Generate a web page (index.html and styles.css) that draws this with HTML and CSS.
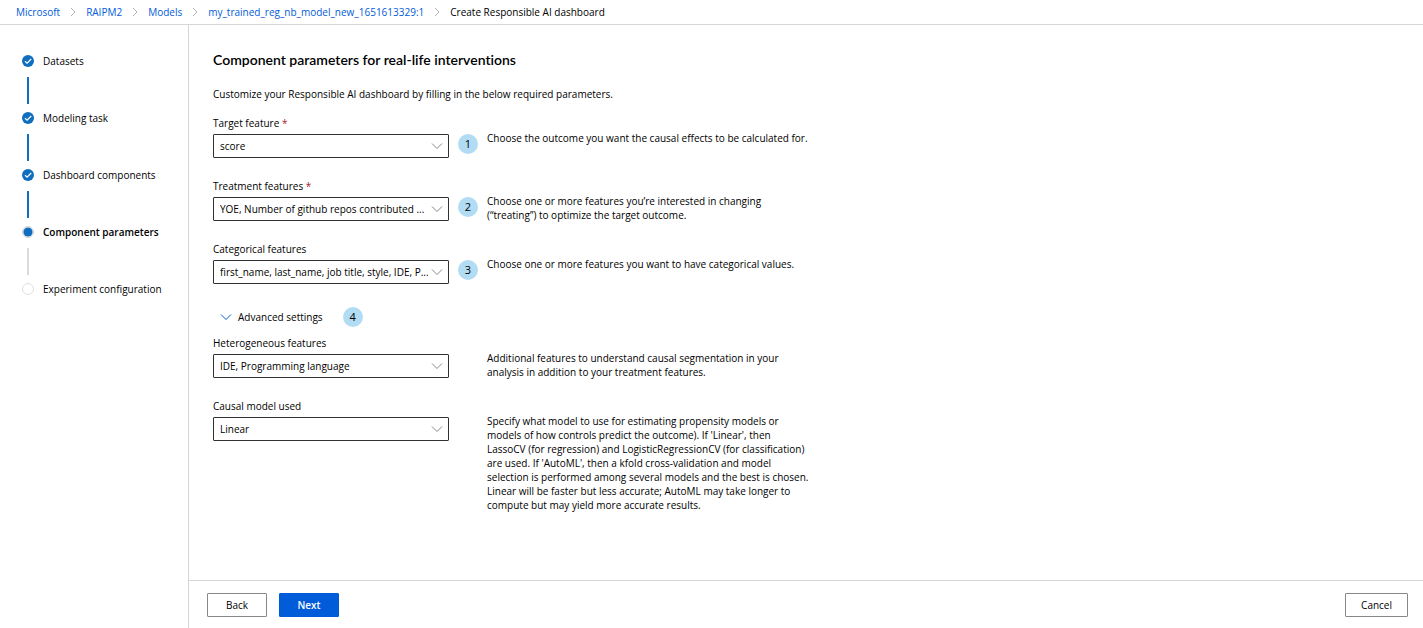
FILE: index.html
```html
<!DOCTYPE html>
<html lang="en">
<head>
<meta charset="utf-8">
<meta name="viewport" content="width=device-width, initial-scale=1">
<title>Create Responsible AI dashboard</title>
<link rel="stylesheet" href="styles.css">
</head>
<body>
<svg class="defs" aria-hidden="true">
  <symbol id="chevron-right" viewBox="0 0 6 10"><path d="M1 1l4 4-4 4" fill="none" stroke="currentColor"/></symbol>
  <symbol id="chevron-down" viewBox="0 0 12 8"><path d="M1 1.5l5 5 5-5" fill="none" stroke="currentColor"/></symbol>
  <symbol id="step-done" viewBox="0 0 12 12"><circle cx="6" cy="6" r="6" fill="#106ebe"/><path d="M3 6.2l2.1 2L9.2 4" fill="none" stroke="#fff" stroke-width="1.2"/></symbol>
  <symbol id="step-current" viewBox="0 0 12 12"><circle cx="6" cy="6" r="5.5" fill="#fff" stroke="#d2d0ce"/><circle cx="6" cy="6" r="4.6" fill="#106ebe"/></symbol>
  <symbol id="step-todo" viewBox="0 0 12 12"><circle cx="6" cy="6" r="5.5" fill="#fff" stroke="#e1dfdd"/></symbol>
</svg>
<nav class="breadcrumb" aria-label="Breadcrumb">
  <a href="#">Microsoft</a>
  <svg class="crumb-sep"><use href="#chevron-right"/></svg>
  <a href="#">RAIPM2</a>
  <svg class="crumb-sep"><use href="#chevron-right"/></svg>
  <a href="#">Models</a>
  <svg class="crumb-sep"><use href="#chevron-right"/></svg>
  <a href="#">my_trained_reg_nb_model_new_1651613329:1</a>
  <svg class="crumb-sep"><use href="#chevron-right"/></svg>
  <span aria-current="page">Create Responsible AI dashboard</span>
</nav>
<div class="workspace">
  <aside class="sidebar">
    <ol class="steps">
      <li class="step done"><svg class="step-icon"><use href="#step-done"/></svg><span>Datasets</span></li>
      <li class="step done"><svg class="step-icon"><use href="#step-done"/></svg><span>Modeling task</span></li>
      <li class="step done"><svg class="step-icon"><use href="#step-done"/></svg><span>Dashboard components</span></li>
      <li class="step current" aria-current="step"><svg class="step-icon"><use href="#step-current"/></svg><span>Component parameters</span></li>
      <li class="step"><svg class="step-icon"><use href="#step-todo"/></svg><span>Experiment configuration</span></li>
    </ol>
  </aside>
  <form class="panel">
    <main class="content">
      <h1>Component parameters for real-life interventions</h1>
      <p class="intro">Customize your Responsible AI dashboard by filling in the below required parameters.</p>

      <div class="row">
        <div class="field">
          <label for="target">Target feature <span class="required">*</span></label>
          <div class="select"><select id="target"><option>score</option></select><svg><use href="#chevron-down"/></svg></div>
        </div>
        <span class="badge">1</span>
        <p class="help">Choose the outcome you want the causal effects to be calculated for.</p>
      </div>
      <div class="row">
        <div class="field">
          <label for="treatment">Treatment features <span class="required">*</span></label>
          <div class="select"><select id="treatment"><option>YOE, Number of github repos contributed ...</option></select><svg><use href="#chevron-down"/></svg></div>
        </div>
        <span class="badge">2</span>
        <p class="help">Choose one or more features you’re interested in changing (“treating”) to optimize the target outcome.</p>
      </div>
      <div class="row">
        <div class="field">
          <label for="categorical">Categorical features</label>
          <div class="select"><select id="categorical"><option>first_name, last_name, job title, style, IDE, P...</option></select><svg><use href="#chevron-down"/></svg></div>
        </div>
        <span class="badge">3</span>
        <p class="help">Choose one or more features you want to have categorical values.</p>
      </div>

      <div class="advanced">
        <button type="button" class="toggle" aria-expanded="true"><svg><use href="#chevron-down"/></svg>Advanced settings</button>
        <span class="badge">4</span>
      </div>

      <div class="row">
        <div class="field">
          <label for="heterogeneous">Heterogeneous features</label>
          <div class="select"><select id="heterogeneous"><option>IDE, Programming language</option></select><svg><use href="#chevron-down"/></svg></div>
        </div>
        <p class="help">Additional features to understand causal segmentation in your analysis in addition to your treatment features.</p>
      </div>
      <div class="row">
        <div class="field">
          <label for="model">Causal model used</label>
          <div class="select"><select id="model"><option>Linear</option></select><svg><use href="#chevron-down"/></svg></div>
        </div>
        <p class="help">Specify what model to use for estimating propensity models or models of how controls predict the outcome). If 'Linear', then LassoCV (for regression) and LogisticRegressionCV (for classification) are used. If 'AutoML', then a kfold cross-validation and model selection is performed among several models and the best is chosen. Linear will be faster but less accurate; AutoML may take longer to compute but may yield more accurate results.</p>
      </div>
    </main>
    <footer class="actions">
      <button type="button" class="btn">Back</button>
      <button type="button" class="btn primary">Next</button>
      <button type="button" class="btn cancel">Cancel</button>
    </footer>
  </form>
</div>
</body>
</html>
```
FILE: styles.css
```css
* { box-sizing: border-box; }

body {
  margin: 0;
  min-height: 100vh;
  display: flex;
  flex-direction: column;
  background: #fff;
  color: #000;
  font: 10px/16px "Segoe UI", "Open Sans", "Noto Sans", sans-serif;
}

h1, p, ol { margin: 0; padding: 0; }
button, select { font: inherit; color: inherit; }

.defs { display: none; }

.breadcrumb {
  display: flex;
  align-items: center;
  height: 25px;
  padding: 0 16px;
  border-bottom: 1px solid #d6d6d6;
  white-space: nowrap;
}
.breadcrumb a { color: #015cda; text-decoration: none; }
.crumb-sep { width: 6px; height: 10px; margin: 0 10px; color: #b3b0ad; }

.workspace { flex: 1; display: flex; }

.sidebar {
  flex: none;
  width: 189px;
  padding: 28px 0 0 22px;
  border-right: 1px solid #d6d6d6;
}
.steps { list-style: none; }
.step {
  display: grid;
  grid-template-columns: 12px 1fr;
  column-gap: 9px;
  align-items: center;
  white-space: nowrap;
}
.step-icon { width: 12px; height: 12px; }
.step:not(:last-child)::after {
  content: "";
  width: 2px;
  height: 27px;
  margin: 8px 0 6px;
  justify-self: center;
  background: #dddbd9;
}
.step.done::after { background: #106ebe; }
.current { font-weight: 600; }

.panel { flex: 1; min-width: 0; display: flex; flex-direction: column; }
.content { flex: 1; padding: 25px 24px 0; }
h1 {
  font-family: "Segoe UI", Lato, "Open Sans", sans-serif;
  font-size: 14px;
  line-height: 20px;
  font-weight: 600;
  font-variant-ligatures: none;
}
.intro { margin: 16px 0 13px; }

.row {
  display: grid;
  grid-template-columns: 236px 20px minmax(0, 322px);
  column-gap: 9px;
  align-items: start;
  min-height: 63px;
}
.field { grid-column: 1; }
.field label { display: block; margin-bottom: 3px; }
.required { color: #a4262c; }
.select { display: grid; align-items: center; }
.select > * { grid-area: 1 / 1; }
.select select {
  width: 100%;
  height: 24px;
  padding: 0 20px 0 6px;
  border: 1px solid #323130;
  border-radius: 1px;
  background: #fff;
  appearance: none;
}
.select svg {
  width: 12px;
  height: 8px;
  margin-right: 6px;
  justify-self: end;
  color: #8a8886;
  pointer-events: none;
}
.badge {
  display: grid;
  place-items: center;
  width: 20px;
  height: 20px;
  border-radius: 50%;
  background: #b1dcf4;
  font-size: 11px;
}
.row .badge { margin-top: 19px; }
.help { grid-column: 3; padding-top: 16px; line-height: 14px; }

.advanced { display: flex; align-items: center; gap: 20px; margin: 3px 0 8px; }
.toggle {
  display: flex;
  align-items: center;
  gap: 6px;
  padding: 0 0 0 7px;
  border: 0;
  background: none;
}
.toggle svg { width: 12px; height: 8px; color: #015cda; }

.actions {
  display: flex;
  gap: 12px;
  padding: 12px 15px 11px 18px;
  border-top: 1px solid #d6d6d6;
}
.btn {
  min-width: 60px;
  height: 24px;
  padding: 0 15px;
  border: 1px solid #8a8886;
  border-radius: 1px;
  background: #fff;
}
.primary { border-color: #015cda; background: #015cda; color: #fff; font-weight: 600; }
.cancel { margin-left: auto; }
```
